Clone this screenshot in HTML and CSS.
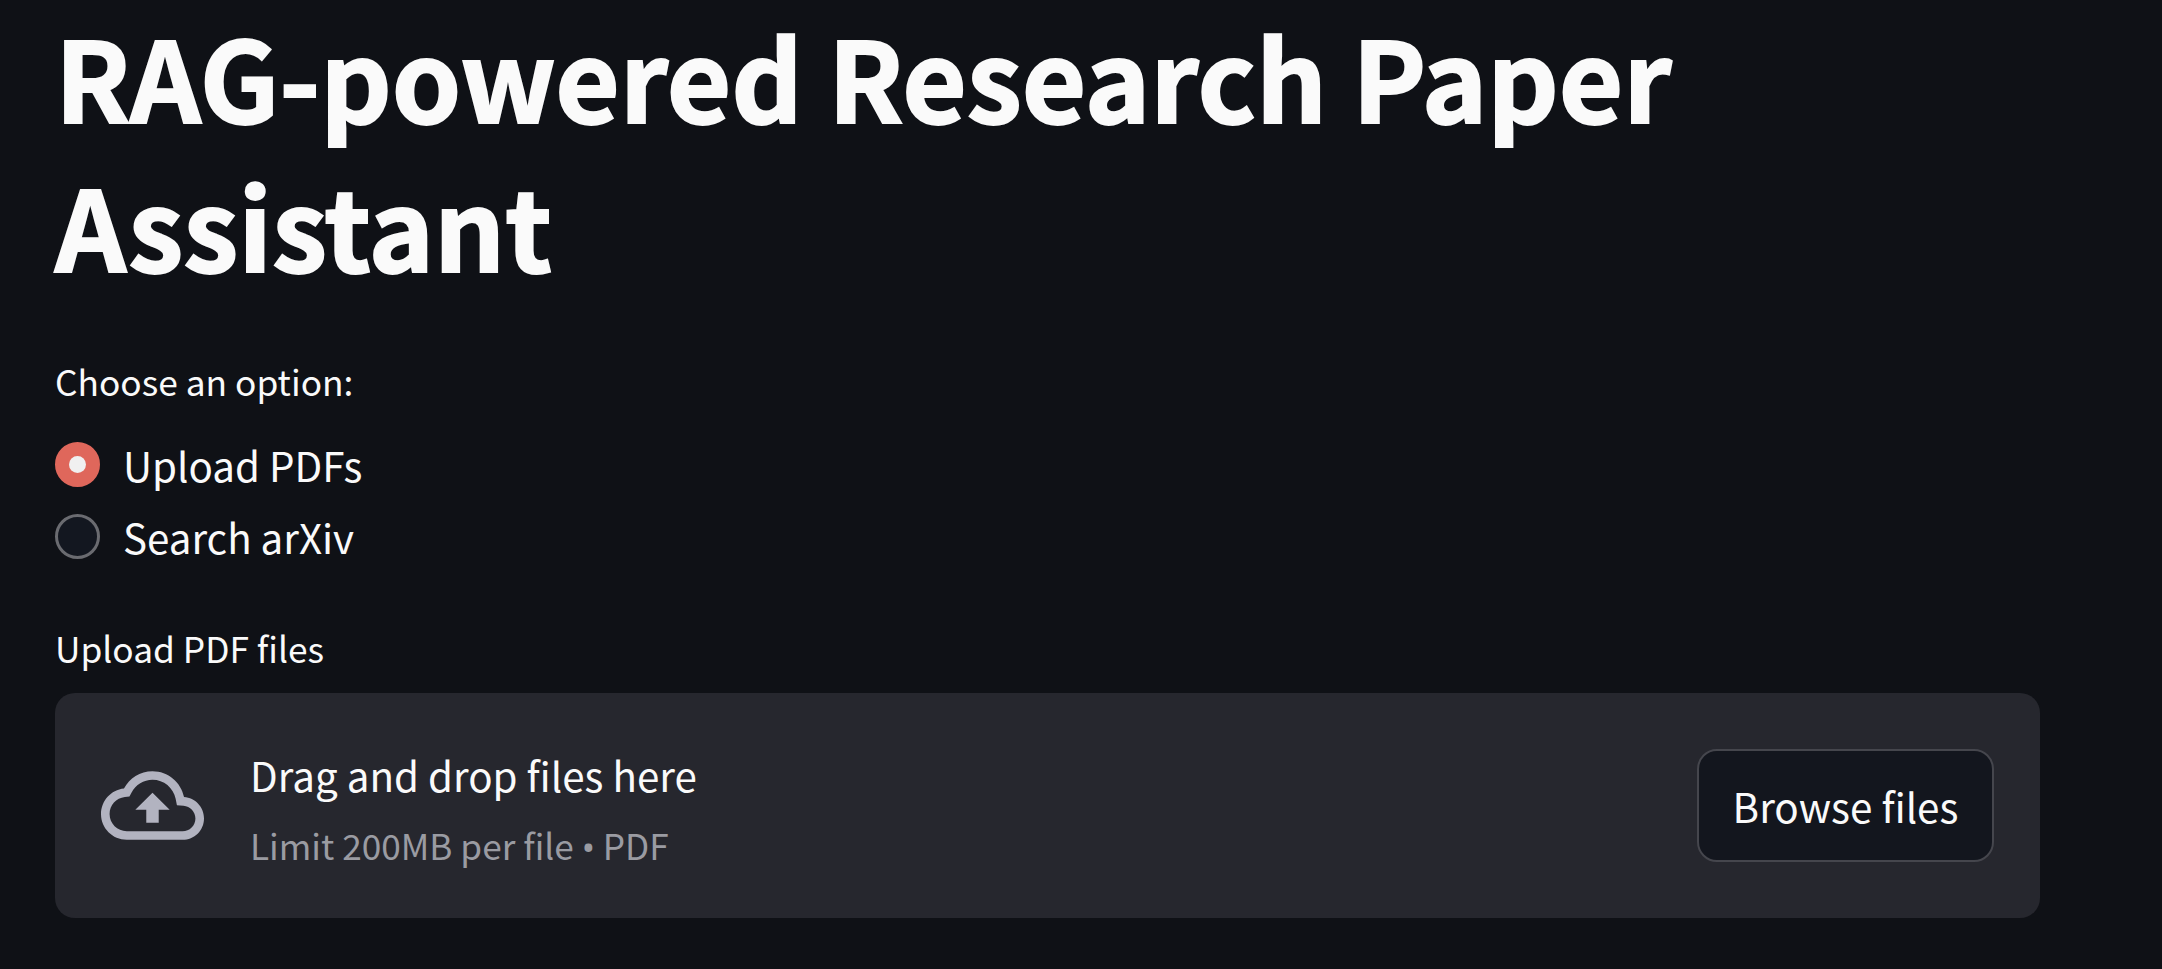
FILE: index.html
```html
<!DOCTYPE html>
<html lang="en">
<head>
<meta charset="utf-8">
<title>RAG-powered Research Paper Assistant</title>
<link rel="stylesheet" href="styles.css">
</head>
<body>
<main class="page">
  <h1 class="title">RAG-powered Research Paper Assistant</h1>
  <p class="label label-choose">Choose an option:</p>
  <div class="radios">
    <div class="radio"><span class="dot dot-on"></span><span>Upload PDFs</span></div>
    <div class="radio"><span class="dot"></span><span>Search arXiv</span></div>
  </div>
  <p class="label label-upload">Upload PDF files</p>
  <section class="drop">
    <svg class="cloud" viewBox="0 0 24 24" aria-hidden="true"><path d="M19.35 10.04C18.67 6.59 15.64 4 12 4 9.11 4 6.6 5.64 5.35 8.04 2.34 8.36 0 10.91 0 14c0 3.31 2.69 6 6 6h13c2.76 0 5-2.24 5-5 0-2.64-2.05-4.78-4.65-4.96zM19 18H6c-2.21 0-4-1.79-4-4 0-2.05 1.53-3.76 3.56-3.97l1.07-.11.5-.95C8.08 7.14 9.94 6 12 6c2.62 0 4.88 1.86 5.39 4.43l.3 1.5 1.53.11c1.56.1 2.78 1.41 2.78 2.96 0 1.65-1.35 3-3 3zM8 13h2.55v3h2.9v-3H16l-4-4z"/></svg>
    <div class="drop-text">
      <div class="drop-main">Drag and drop files here</div>
      <div class="drop-sub">Limit 200MB per file <span class="sep">•</span> PDF</div>
    </div>
    <button class="browse" type="button">Browse files</button>
  </section>
</main>
</body>
</html>
```

FILE: styles.css
```css
* { box-sizing: border-box; }
html, body { margin: 0; height: 100%; }
body {
  background: #0f1116;
  color: #fafafa;
  font-family: "Noto Sans CJK SC", "Noto Sans", sans-serif;
  overflow: hidden;
}
.page { width: 1985px; margin-left: 55px; padding-top: 0; }
.title {
  margin: 0;
  width: 1900px;
  font-size: 111px;
  line-height: 149px;
  font-weight: 700;
  -webkit-text-stroke: 2px #fafafa;
}
.label { margin: 0; font-size: 35.3px; line-height: 50px; }
.label-choose { margin-top: 58px; }
.radios { display: flex; flex-direction: column; gap: 19px; margin-top: 32px; }
.radio { display: flex; align-items: center; gap: 23px; height: 53px; font-size: 40.3px; }
.dot { width: 45px; height: 45px; border-radius: 50%; background: #131720; border: 3px solid #6a6b70; }
.dot-on { background: #df675b; border: 14px solid #df675b; position: relative; }
.dot-on::after { content: ""; position: absolute; inset: 0; border-radius: 50%; background: #f0f0f0; }
.label-upload { margin-top: 60px; }
.drop {
  display: flex; align-items: center;
  height: 225px;
  margin-top: 20px;
  padding: 0 46px;
  background: #26272e;
  border-radius: 20px;
}
.cloud { width: 103px; height: 103px; fill: #b2b3c0; flex: none; }
.drop-text { margin-left: 46px; flex: 1; padding-top: 6px; }
.drop-main { font-size: 40.3px; line-height: 58px; }
.drop-sub { font-size: 35.2px; line-height: 50px; color: #9a9ba2; margin-top: 16px; }
.sep { font-family: "Noto Sans", sans-serif; }
.browse {
  width: 297px; height: 113px;
  background: #13161e; color: #fafafa;
  border: 2px solid #45464d; border-radius: 20px;
  font: inherit; font-size: 40.4px;
}
```
